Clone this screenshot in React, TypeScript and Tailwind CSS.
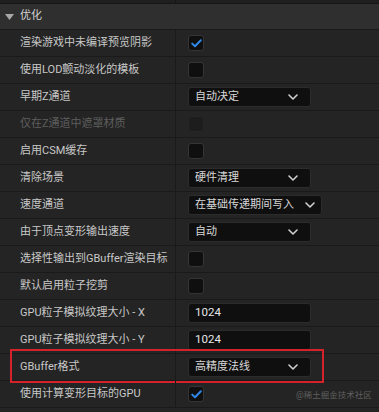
import React from 'react';

type Control =
  | { kind: 'check'; checked?: boolean; disabled?: boolean }
  | { kind: 'select'; value: string; wide?: boolean }
  | { kind: 'number'; value: string };

interface Row {
  label: string;
  disabled?: boolean;
  control: Control;
  highlight?: boolean;
}

const rows: Row[] = [
  { label: '渲染游戏中未编译预览阴影', control: { kind: 'check', checked: true } },
  { label: '使用LOD颤动淡化的模板', control: { kind: 'check' } },
  { label: '早期Z通道', control: { kind: 'select', value: '自动决定' } },
  { label: '仅在Z通道中遮罩材质', disabled: true, control: { kind: 'check', disabled: true } },
  { label: '启用CSM缓存', control: { kind: 'check' } },
  { label: '清除场景', control: { kind: 'select', value: '硬件清理' } },
  { label: '速度通道', control: { kind: 'select', value: '在基础传递期间写入', wide: true } },
  { label: '由于顶点变形输出速度', control: { kind: 'select', value: '自动' } },
  { label: '选择性输出到GBuffer渲染目标', control: { kind: 'check' } },
  { label: '默认启用粒子挖剪', control: { kind: 'check' } },
  { label: 'GPU粒子模拟纹理大小 - X', control: { kind: 'number', value: '1024' } },
  { label: 'GPU粒子模拟纹理大小 - Y', control: { kind: 'number', value: '1024' } },
  { label: 'GBuffer格式', control: { kind: 'select', value: '高精度法线' }, highlight: true },
  { label: '使用计算变形目标的GPU', control: { kind: 'check', checked: true } },
];

const Chevron = () => (
  <svg width="10" height="6" viewBox="0 0 10 6" className="shrink-0">
    <path d="M1 1 L5 5 L9 1" fill="none" stroke="#d0d0d0" strokeWidth="1.6" strokeLinecap="round" strokeLinejoin="round" />
  </svg>
);

const Checkbox = ({ checked, disabled }: { checked?: boolean; disabled?: boolean }) => (
  <div
    className={`w-[16px] h-[16px] rounded-[3px] border flex items-center justify-center ${
      disabled ? 'bg-[#1d1d1d] border-[#262626]' : 'bg-[#0f0f0f] border-[#353535]'
    }`}
  >
    {checked && (
      <svg width="11" height="9" viewBox="0 0 11 9">
        <path d="M1.2 4.6 L4 7.3 L9.8 1.3" fill="none" stroke="#2f87e6" strokeWidth="2" strokeLinecap="round" strokeLinejoin="round" />
      </svg>
    )}
  </div>
);

const ControlCell = ({ control }: { control: Control }) => {
  if (control.kind === 'check') return <Checkbox checked={control.checked} disabled={control.disabled} />;
  if (control.kind === 'number') {
    return (
      <div className="w-[123px] h-[20px] rounded-[3px] bg-[#0f0f0f] border border-[#2c2c2c] flex items-center px-[6px] text-[11.5px] text-[#e6e6e6]">
        {control.value}
      </div>
    );
  }
  return (
    <div
      className={`h-[20px] rounded-[3px] bg-[#0f0f0f] border border-[#2c2c2c] flex items-center justify-between pl-[6px] ${
        control.wide ? 'w-[134px] pr-[6px]' : 'w-[123px] pr-[12px]'
      }`}
    >
      <span className="text-[11px] text-[#d8d8d8] whitespace-nowrap">{control.value}</span>
      <Chevron />
    </div>
  );
};

export default function App() {
  return (
    <div
      className="w-[379px] h-[412px] overflow-hidden bg-[#242424] relative"
      style={{ fontFamily: "Roboto, 'Noto Sans CJK SC', sans-serif" }}
    >
      {/* cut-off row above */}
      <div className="h-[4px] bg-[#1f1f1f] border-b border-[#151515] grid grid-cols-[176px_1fr]">
        <div className="border-r border-[#151515]" />
        <div />
      </div>

      {/* category header */}
      <div className="h-[26px] bg-[#2f2f2f] border-b border-[#1a1a1a] flex items-center">
        <svg width="9" height="6" viewBox="0 0 9 6" className="ml-[5px] mr-[6px]">
          <path d="M0 0 H9 L4.5 6 Z" fill="#a8a8a8" />
        </svg>
        <span className="text-[11px] text-[#d4d4d4]">优化</span>
      </div>

      {rows.map((row) => (
        <div key={row.label} className="relative h-[27px] grid grid-cols-[176px_1fr] border-b border-[#1a1a1a]">
          <div className="border-r border-[#1a1a1a] flex items-center pl-[20px]">
            <span className={`text-[11px] whitespace-nowrap ${row.disabled ? 'text-[#5e5e5e]' : 'text-[#c8c8c8]'}`}>
              {row.label}
            </span>
          </div>
          <div className="flex items-center pl-[12px]">
            <ControlCell control={row.control} />
          </div>
          {row.highlight && (
            <div className="absolute left-[10px] right-[55px] top-[-5px] bottom-[-3px] border-2 border-[#d3222b] pointer-events-none" />
          )}
        </div>
      ))}

      <span className="absolute left-[296px] top-[389px] text-[8.5px] text-[#5f5f5f] whitespace-nowrap">@稀土掘金技术社区</span>
    </div>
  );
}
